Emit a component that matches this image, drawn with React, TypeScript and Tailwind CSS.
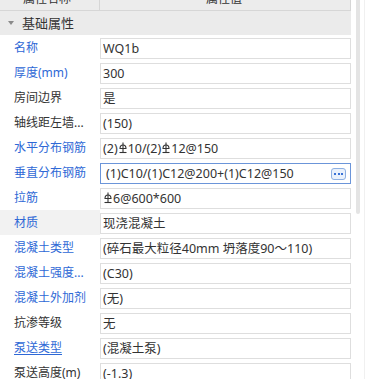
import type { ReactNode } from "react";

/** HRB400 rebar grade mark, drawn as a tiny glyph. */
function Rebar() {
  return (
    <svg
      width="8"
      height="12"
      viewBox="0 0 8 12"
      className="mx-[1px] inline-block -translate-y-[1px] align-middle"
      fill="none"
      stroke="#333"
      strokeWidth="1.1"
    >
      <path d="M4 0.5V10.5" />
      <path d="M1 6.5Q1 3 4 3Q7 3 7 6.5H1Z" />
      <path d="M0.5 10.5H7.5" />
    </svg>
  );
}

type Row = {
  label: string;
  value: ReactNode;
  blue?: boolean;
  underline?: boolean;
  active?: boolean;
  shaded?: boolean;
};

const rows: Row[] = [
  { label: "名称", value: "WQ1b", blue: true },
  { label: "厚度(mm)", value: "300", blue: true },
  { label: "房间边界", value: "是" },
  { label: "轴线距左墙...", value: "(150)" },
  {
    label: "水平分布钢筋",
    blue: true,
    value: (
      <>
        (2)
        <Rebar />
        10/(2)
        <Rebar />
        12@150
      </>
    ),
  },
  { label: "垂直分布钢筋", value: "(1)C10/(1)C12@200+(1)C12@150", blue: true, active: true },
  {
    label: "拉筋",
    blue: true,
    value: (
      <>
        <Rebar />
        6@600*600
      </>
    ),
  },
  { label: "材质", value: "现浇混凝土", blue: true, shaded: true },
  { label: "混凝土类型", value: "(碎石最大粒径40mm 坍落度90～110)", blue: true },
  { label: "混凝土强度...", value: "(C30)", blue: true },
  { label: "混凝土外加剂", value: "(无)", blue: true },
  { label: "抗渗等级", value: "无" },
  { label: "泵送类型", value: "(混凝土泵)", blue: true, underline: true },
  { label: "泵送高度(m)", value: "(-1.3)" },
];

function PropRow({ row }: { row: Row }) {
  return (
    <div className="flex h-[25px]">
      <div
        className={
          "flex w-[100px] shrink-0 items-center pl-[14px] " +
          (row.shaded ? "bg-[#f2f2f2] " : "") +
          (row.blue ? "text-[#2e68d6] " : "text-[#333] ") +
          (row.underline ? "underline underline-offset-2" : "")
        }
      >
        {row.label}
      </div>
      <div className="flex-1 pt-[3px] pb-[1px]">
        <div
          className={
            "flex h-[21px] items-center border bg-white text-[12.5px] " +
            (row.active ? "border-[#6b95d9] pl-[5px] pr-[4px]" : "border-[#dedede] pl-[2px]")
          }
        >
          <span className="flex-1 truncate text-[#333]">{row.value}</span>
          {row.active && (
            <button
              type="button"
              className="flex h-[12px] w-[15px] items-center justify-center gap-[1.5px] rounded-[3px] border border-[#8eb0e2] bg-[#e9f1fc]"
            >
              <span className="h-[2px] w-[2px] bg-[#3a72d6]" />
              <span className="h-[2px] w-[2px] bg-[#3a72d6]" />
              <span className="h-[2px] w-[2px] bg-[#3a72d6]" />
            </button>
          )}
        </div>
      </div>
    </div>
  );
}

export default function App() {
  return (
    <div
      className="flex h-[379px] w-[368px] overflow-hidden bg-white text-[12px] leading-[16px]"
      style={{ fontFamily: '"Noto Sans", "Noto Sans CJK SC", sans-serif' }}
    >
      <div className="w-[351px] shrink-0">
        {/* column header, mostly scrolled out of view */}
        <div className="-mt-[12px] flex h-[23px] border-b border-r border-[#d6d6d6] bg-[#ececec] text-[#333]">
          <div className="flex w-[100px] items-center border-r border-[#d6d6d6] pl-[23px]">属性名称</div>
          <div className="flex flex-1 items-center pl-[106px]">属性值</div>
        </div>
        {/* group row */}
        <div className="flex h-[24px] items-center bg-[#ebebeb] text-[13px] text-[#333]">
          <span className="ml-[8px] mr-[8px] h-0 w-0 border-x-[3px] border-t-[4px] border-x-transparent border-t-[#8a8a8a]" />
          基础属性
        </div>
        {rows.map((row) => (
          <PropRow key={row.label} row={row} />
        ))}
      </div>
      <div className="ml-[5px] w-[4px] shrink-0">
        <div className="h-[214px] rounded-b-[2px] bg-[#e4e4e4]" />
      </div>
      <div className="ml-[4px] w-px shrink-0 bg-[#f0f0f0]" />
    </div>
  );
}
